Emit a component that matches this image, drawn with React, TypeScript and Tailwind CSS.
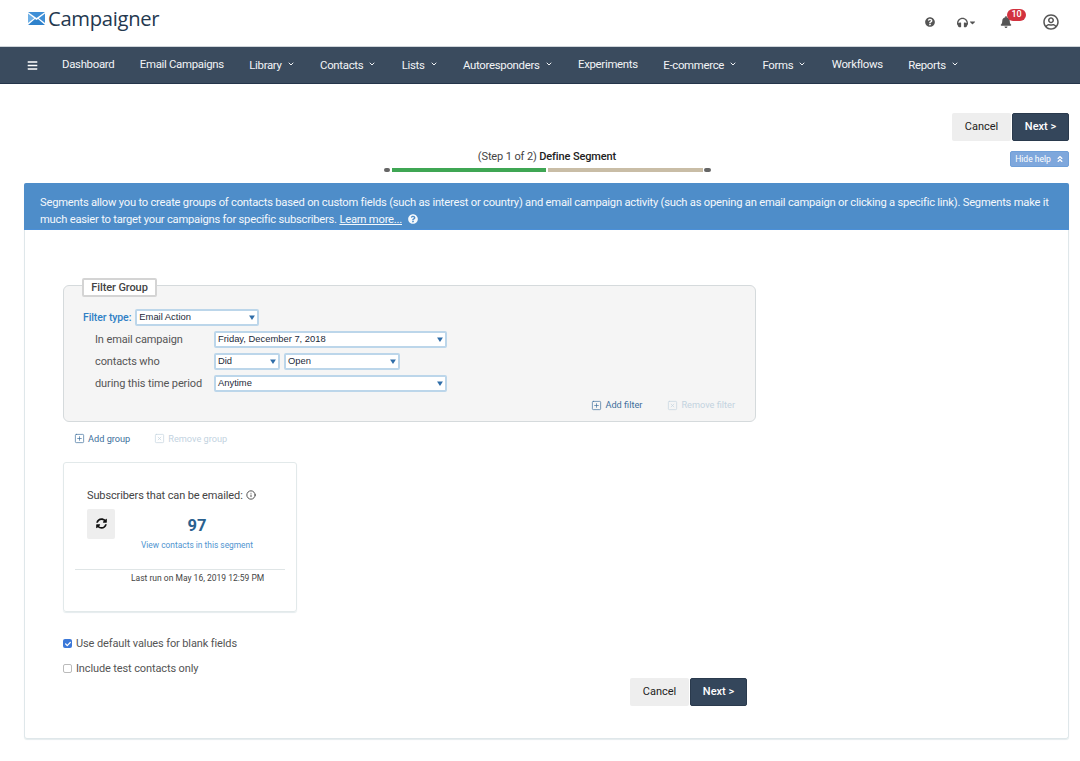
import React from "react";
import { FaBars, FaQuestionCircle, FaHeadphones, FaBell, FaRegUserCircle, FaCaretDown, FaAngleDoubleUp, FaSyncAlt, FaCheck } from "react-icons/fa";
import { SquarePlus, SquareX, Info, ChevronDown } from "lucide-react";

const navItems: [string, boolean][] = [
  ["Dashboard", false],
  ["Email Campaigns", false],
  ["Library", true],
  ["Contacts", true],
  ["Lists", true],
  ["Autoresponders", true],
  ["Experiments", false],
  ["E-commerce", true],
  ["Forms", true],
  ["Workflows", false],
  ["Reports", true],
];

function Logo() {
  return (
    <div className="flex items-center gap-[3px]">
      <svg width="17" height="13" viewBox="0 0 17 13" className="ml-[1px]">
        <path d="M0 0 H17 L8.5 6 Z" fill="#3f8fd6" />
        <path d="M0 1.6 L6.2 6.2 L0 11 Z" fill="#6fb0e6" />
        <path d="M17 1.6 L10.8 6.2 L17 11 Z" fill="#3f8fd6" />
        <path d="M0 13 L7 7 L8.5 8 L10 7 L17 13 Z" fill="#2f82cc" />
      </svg>
      <span className="text-[20.2px] leading-none text-[#24384f] font-['Open_Sans',sans-serif] font-medium tracking-[-0.3px]">Campaigner</span>
    </div>
  );
}

function Select({ w, text }: { w: string; text: string }) {
  return (
    <div className={`${w} flex h-[17px] items-center justify-between rounded-[2px] border-2 border-[#bcd6ea] bg-white pl-[2px] pr-[2px] text-[9.4px] tracking-normal text-[#1c2a3a] font-['Liberation_Sans',sans-serif]`}>
      <span>{text}</span>
      <svg width="6" height="5" viewBox="0 0 7 6"><path d="M0 0.5 H7 L3.5 6 Z" fill="#2f6da8" /></svg>
    </div>
  );
}

function Actions({ className = "" }: { className?: string }) {
  return (
    <div className={`flex gap-[1px] ${className}`}>
      <button className="h-[28px] w-[59px] rounded-[2px] bg-[#eeeeee] pt-[1px] text-[11px] text-[#222]">Cancel</button>
      <button className="h-[28px] w-[57px] rounded-[2px] border border-[#2a3a4d] bg-[#34465b] pt-[1px] text-[11px] font-medium text-white">Next &gt;</button>
    </div>
  );
}

export default function App() {
  return (
    <div className="relative h-[761px] w-[1080px] overflow-hidden bg-white font-['Roboto',sans-serif] text-[#444]">
      <header className="flex h-[46px] items-center justify-between pl-[27px]">
        <div className="mb-[9px]"><Logo /></div>
        <div className="mb-[2px] flex items-center pr-[21px] text-[#555]">
          <FaQuestionCircle className="ml-[1px] mr-[22px] text-[10px]" />
          <span className="mr-[23px] flex items-center">
            <FaHeadphones className="text-[11px]" />
            <FaCaretDown className="text-[9px]" />
          </span>
          <span className="relative mr-[31px]">
            <FaBell className="text-[12px]" />
            <span className="absolute left-[7px] top-[-7px] flex h-[12px] w-[19px] items-center justify-center rounded-full bg-[#d2323f] text-[9px] font-medium text-white">10</span>
          </span>
          <FaRegUserCircle className="text-[16px]" />
        </div>
      </header>

      <nav className="flex h-[38px] items-center border-y border-b-[#24354a] border-t-[#cfd5da] bg-[#3a4b5e] pl-[27px] text-[11.4px] tracking-[-0.3px] text-[#f2f4f6]">
        <FaBars className="mr-[24px] text-[11px] text-white" />
        <div className="flex items-center gap-[25.4px]">
          {navItems.map(([label, chev]) => (
            <span key={label} className={`flex items-center ${chev ? "mt-[1px]" : "mt-[-1px]"}`}>
              {label}
              {chev && <ChevronDown className="ml-[5px] mt-[-2px]" size={8} strokeWidth={3} />}
            </span>
          ))}
        </div>
      </nav>

      <main className="px-[24px] pt-[29px]">
        <div className="flex w-[1045px] justify-end">
          <Actions />
        </div>

        <div className="relative mt-[9px] flex w-[1045px] flex-col items-center pl-[1px]">
          <div className="text-[11px] leading-[13px] tracking-[-0.12px] text-[#444]">
            (Step 1 of 2) <span className="font-medium text-[#222]">Define Segment</span>
          </div>
          <div className="mt-[5px] flex h-[4px] w-[327px] items-center">
            <span className="h-[4px] w-[6px] rounded-[2px] bg-[#666]" />
            <span className="ml-[2px] h-[4px] w-[154px] bg-[#3fa654]" />
            <span className="ml-[2px] h-[4px] w-[155px] bg-[#c9bda6]" />
            <span className="ml-[1px] h-[4px] w-[7px] rounded-[2px] bg-[#666]" />
          </div>
          <button className="absolute right-0 top-[1px] flex h-[16px] w-[59px] items-center justify-center gap-[5px] rounded-[2px] border border-[#6f9fd8] bg-[#7ea7dc] text-[8.5px] text-white">
            Hide help <FaAngleDoubleUp className="text-[8px]" />
          </button>
        </div>

        <section className="mt-[11px] w-[1045px] rounded-[3px] border border-t-0 border-[#dfe7ea] shadow-[0_1px_1px_#e5ecee]">
          <div className="-mx-[1px] h-[47px] rounded-t-[2px] border-b border-[#4a8fd8] bg-[#4e8dc9] px-[16px] pt-[11px] text-[11.2px] leading-[17px] tracking-[-0.22px] text-[#f4f8fc]">
            Segments allow you to create groups of contacts based on custom fields (such as interest or country) and email campaign activity (such as opening an email campaign or clicking a specific link). Segments make it much easier to target your campaigns for specific subscribers.{" "}
            <span className="underline">Learn more...</span>
            <FaQuestionCircle className="ml-[6px] inline-block text-[10px] align-[-1px]" />
          </div>

          <div className="h-[508px] pl-[38px] pt-[55px]">
            <div className="relative h-[137px] w-[693px] rounded-[6px] border border-[#d5dadc] bg-[#f5f5f5] pl-[19px] pt-[23px]">
              <div className="absolute left-[18px] top-[-8px] flex h-[19px] w-[75px] items-center justify-center rounded-[2px] border-2 border-[#d4d4d4] bg-white pt-[1px] text-[11px] font-medium tracking-[-0.1px] text-[#444]">Filter Group</div>
              <div className="flex items-center gap-[4px] text-[10.5px] font-medium tracking-[-0.1px] text-[#2f80c5]">
                Filter type:
                <Select w="w-[124px]" text="Email Action" />
              </div>
              <div className="ml-[12px] mt-[4px] flex flex-col gap-[5px] text-[11px] tracking-[-0.12px] text-[#555]">
                <div className="flex h-[18px] items-center">
                  <span className="w-[119px] pt-[2px]">In email campaign</span>
                  <Select w="w-[233px]" text="Friday, December 7, 2018" />
                </div>
                <div className="flex h-[17px] items-center">
                  <span className="w-[119px] pt-[2px]">contacts who</span>
                  <Select w="w-[66px]" text="Did" />
                  <Select w="w-[116px] ml-[4px]" text="Open" />
                </div>
                <div className="flex h-[17px] items-center">
                  <span className="w-[119px] pt-[2px]">during this time period</span>
                  <Select w="w-[233px]" text="Anytime" />
                </div>
              </div>
              <div className="absolute bottom-[9px] right-[20px] flex items-center gap-[25px] text-[9.2px]">
                <span className="flex items-center gap-[3px] text-[#3d6f9c]"><SquarePlus size={11} strokeWidth={1.5} />Add filter</span>
                <span className="flex items-center gap-[3px] text-[#c3d3df]"><SquareX size={11} strokeWidth={1.5} />Remove filter</span>
              </div>
            </div>

            <div className="ml-[11px] mt-[10px] flex items-center gap-[24px] text-[9.2px]">
              <span className="flex items-center gap-[3px] text-[#3d6f9c]"><SquarePlus size={11} strokeWidth={1.5} />Add group</span>
              <span className="flex items-center gap-[3px] text-[#c3d3df]"><SquareX size={11} strokeWidth={1.5} />Remove group</span>
            </div>

            <div className="mt-[16px] h-[150px] w-[234px] rounded-[3px] border border-[#e2e9ea] px-[11px] pt-[26px] shadow-[0_1px_1px_#e5ecee]">
              <div className="flex items-center gap-[3px] pl-[12px] text-[11px] leading-[13px] tracking-[-0.12px] text-[#444]">
                Subscribers that can be emailed: <Info size={10} strokeWidth={2} className="text-[#333]" />
              </div>
              <div className="mt-[7px] flex pl-[12px]">
                <div className="flex h-[30px] w-[28px] items-center justify-center rounded-[2px] bg-[#eeeeee] text-[11px] text-[#111]"><FaSyncAlt /></div>
                <div className="ml-[26px] flex flex-col items-center">
                  <span className="mt-[7px] text-[16.5px] font-bold leading-[20px] text-[#2a618f]">97</span>
                  <span className="mt-[3px] text-[8.4px] leading-[12px] text-[#4f94d0]">View contacts in this segment</span>
                </div>
              </div>
              <div className="mt-[18px] border-t border-[#dfe5e6] pl-[56px] pt-[2px] text-[8.5px] leading-[12px] text-[#444]">Last run on May 16, 2019 12:59 PM</div>
            </div>

            <div className="mt-[25px] flex h-[14px] items-center gap-[4px] text-[11px] tracking-[-0.12px] text-[#555]">
              <span className="flex h-[9px] w-[9px] items-center justify-center rounded-[2px] bg-[#3b78d8] text-[6px] text-white"><FaCheck /></span>
              Use default values for blank fields
            </div>
            <div className="mt-[11px] flex h-[14px] items-center gap-[4px] text-[11px] tracking-[-0.12px] text-[#555]">
              <span className="h-[9px] w-[9px] rounded-[2px] border border-[#bbb] bg-white" />
              Include test contacts only
            </div>
            <Actions className="ml-[567px] mt-[2px]" />
          </div>
        </section>
      </main>
    </div>
  );
}
